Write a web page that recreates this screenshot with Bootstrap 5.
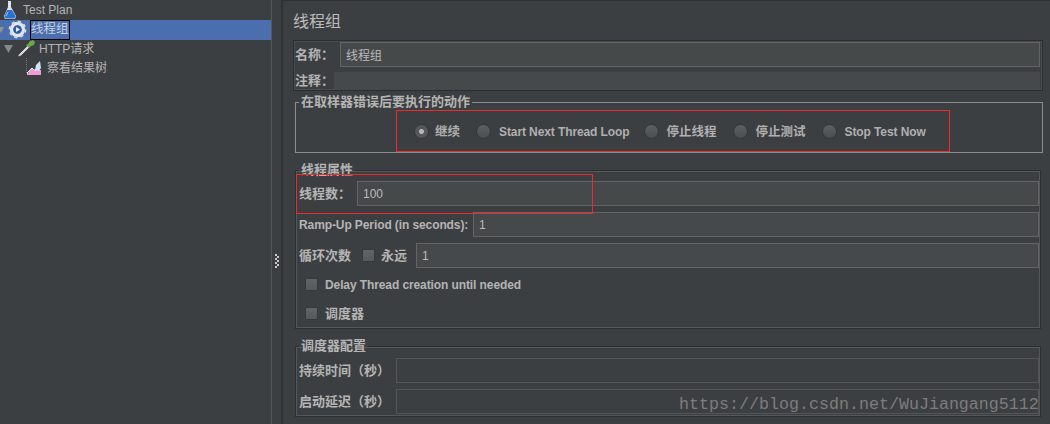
<!doctype html>
<html lang="en">
  <head>
    <meta charset="UTF-8" />
    <title>线程组</title>
    <link rel="stylesheet" href="https://cdn.jsdelivr.net/npm/bootstrap@5.3.0/dist/css/bootstrap.min.css" />
    <style>
      html, body { width: 1050px; height: 424px; overflow: hidden; }
      body {
        background: #3c3f41; color: #bbb; position: relative;
        font: 13px/14px "Liberation Sans", "Noto Sans CJK SC", sans-serif;
      }
      .tree-pane { width: 271px; height: 424px; flex: none; position: relative; }
      .tree-row { height: 19px; display: flex; align-items: center; white-space: nowrap; color: #b4b4b4; font-size: 12px; }
      .tree-row svg { flex: none; }
      .tree-sel { background: #4b6eaf; height: 20px; margin-top: 1px; margin-bottom: -1px; }
      .tree-focus { border: 1px solid #000; height: 20px; line-height: 17px; width: 40px; margin-left: 3px; font-size: 12.500px; color: #c6cfdf; }
      .tree-link { position: absolute; left: 26px; top: 58px; width: 3px; height: 15px; border-left: 1px dotted #77797b; border-bottom: 1px dotted #77797b; }
      .splitter { width: 12px; height: 424px; flex: none; padding-left: 3px; border-left: 1px solid #55585a; border-right: 2px solid #2f3234; }
      .grip { margin-top: 98px; }
      .main-pane { flex: 1; min-width: 0; padding: 0 7px 0 10px; border-top: 1px solid #2f3234; }
      .pane-title { font-size: 16px; line-height: 22px; margin: 10px 0 7px; color: #bbb; }
      .name-box { height: 51px; border: 1px solid #2b2e30; box-shadow: 0 0 0 1px #4a4d4f inset; padding: 1px 2px 1px 1px; }
      .name-row { height: 25px; }
      .cmt-row { height: 18px; margin-top: 5px; }
      .lbl { font-weight: 700; color: #b4b4b4; white-space: nowrap; flex: none; }
      .lat { font-size: 12px; letter-spacing: -0.1px; }
      .name-lbl { width: 45px; }
      .cmt-lbl { width: 39px; }
      .tf {
        background: #45494a; border: 1px solid #646464; border-radius: 0; color: #bbb;
        font: 12px/14px "Liberation Sans", "Noto Sans CJK SC", sans-serif;
        height: 25px; padding: 0 5px; box-shadow: none; min-width: 0; width: auto;
      }
      .tf:focus { background: #45494a; color: #bbb; border-color: #646464; box-shadow: none; }
      .tf-off, .tf-off:disabled { background: #3c3f41; border-color: #555; }
      .cmt-fill { background: #45494a; height: 18px; flex: 1; }
      .grp { border: 1px solid #2d3032; box-shadow: 0 0 0 1px #55585a inset; margin: 10px 2px 0 2px; min-width: 0; padding: 4px 1px 0 3px; }
      .grp-last { padding: 5px 1px 2px 3px; }
      .grp-light { border-color: #8a8c8d; box-shadow: none; margin: 4px 0 0 2px; height: 58px; padding: 0; }
      .grp legend {
        float: none; width: auto; margin: 0; padding: 0 2px; font-size: 13px; line-height: 14px; height: 14px;
        font-weight: 700; color: #b4b4b4;
      }
      .grp-light legend { margin-left: 3px; }
      .radio-line { height: 44px; padding-left: 118px; align-items: center; padding-top: 1px; }
      .rad {
        width: 15px; height: 15px; border-radius: 50%; flex: none; display: inline-block;
        background: linear-gradient(#5c6062, #4b4e50); border: 1px solid #333638;
      }
      .rad-on { background: radial-gradient(circle, #b9b9b9 0 2px, #55585a 3px); }
      .rad-txt { font-size: 12.500px; font-weight: 700; color: #b0b0b0; margin-left: 8px; margin-right: 16px; white-space: nowrap; }
      .rad-txt.first { margin-left: 6px; }
      .rad-txt.lat { font-size: 12px; margin-right: 14px; }
      .fld-row { height: 25px; }
      .fld-row + .fld-row { margin-top: 6px; }
      .chk {
        width: 13px; height: 13px; flex: none; border-radius: 1px;
        background: linear-gradient(#626567, #56595b); border: 1px solid #36393b; display: inline-block;
      }
      .chk-row { height: 29px; padding-left: 6px; }
      .chk-row .lbl { margin-left: 7px; }
      .w-threads { width: 58px; }
      .w-ramp { width: 174px; }
      .w-loop { width: 63px; }
      .w-forever { width: 41px; padding-left: 6px; }
      .w-sched { width: 97px; }
      .mt-2px { margin-top: 2px; }
      .red-box { position: absolute; border: 1px solid #ee2c2c; pointer-events: none; }
      .red-a { left: 396px; top: 110px; width: 554px; height: 42px; }
      .red-b { left: 296px; top: 174px; width: 297px; height: 40px; }
      .wm { position: absolute; left: 679px; top: 395px; font: 16.670px/20px "Liberation Mono", monospace; color: #7c7d7d; white-space: nowrap; }
    </style>
  </head>
  <body>
    <div class="d-flex">
      <!-- tree -->
      <div class="tree-pane">
        <div class="tree-row">
          <svg width="18" height="19" viewBox="0 0 18 19"><path d="M8 1h3v6l5 9-1 3H5l-1-3 4-9z" fill="#dfe3e8"/><path d="M7 10h5l3.500 6-1 2.500H5.500l-1-2.500z" fill="#2a72d0"/><path d="M8 12l-2 4" stroke="#9cc6f2" fill="none"/></svg>
          <span style="margin-left: 5px">Test Plan</span>
        </div>
        <div class="tree-row tree-sel">
          <svg width="27" height="20" viewBox="0 0 27 20"><path d="M-2 7h6l-3 6z" fill="#8f9295"/><g transform="translate(17.500 9.500)"><circle r="6" fill="none" stroke="#e2e5e9" stroke-width="3.400"/><circle r="7.800" fill="none" stroke="#d3d7dc" stroke-width="2.200" stroke-dasharray="3 3.130"/><circle r="4" fill="#2c5fa6"/><path d="M-1.500-2.500 2.500 0-1.500 2.500z" fill="#e8edf2"/></g></svg>
          <span class="tree-focus">线程组</span>
        </div>
        <div class="tree-row">
          <svg width="37" height="19" viewBox="0 0 37 19"><path d="M4 6h9l-4.500 8z" fill="#85888a"/><path d="M17 18l2-3 9-9 2 2-9 9z" fill="#d6d8da" stroke="#26282a" stroke-width=".7"/><path d="M29 9l-3-3 2-1 2-3 3-1 2 2-1 3-3 1z" fill="#6aa84f"/></svg>
          <span style="margin-left: 2px">HTTP请求</span>
        </div>
        <div class="tree-row">
          <svg width="47" height="19" viewBox="0 0 47 19"><path d="M27 17v-2l5-5 2 2h7v5z" fill="#f09bd8"/><path d="M27 15l5-5 2 2h2" fill="none" stroke="#f7f7f7"/><path d="M35 12l1-5 4-4 1 7-2 3z" fill="#cfe3f7"/></svg>
          <span>察看结果树</span>
        </div>
        <div class="tree-link"></div>
      </div>
      <!-- splitter -->
      <div class="splitter d-flex align-items-center">
        <svg class="grip" width="4" height="14" viewBox="0 0 4 14"><g fill="#c8c8c8"><rect x="0" y="0" width="2" height="2"/><rect x="2" y="2" width="2" height="2"/><rect x="0" y="4" width="2" height="2"/><rect x="2" y="6" width="2" height="2"/><rect x="0" y="8" width="2" height="2"/><rect x="2" y="10" width="2" height="2"/><rect x="0" y="12" width="2" height="2"/></g></svg>
      </div>
      <!-- form -->
      <div class="main-pane">
        <div class="pane-title">线程组</div>
        <div class="name-box">
          <div class="d-flex align-items-center name-row">
            <span class="lbl name-lbl">名称：</span>
            <input class="form-control tf flex-fill" value="线程组" />
          </div>
          <div class="d-flex align-items-center cmt-row">
            <span class="lbl cmt-lbl">注释：</span>
            <div class="cmt-fill"></div>
          </div>
        </div>

        <fieldset class="grp grp-light">
          <legend>在取样器错误后要执行的动作</legend>
          <div class="d-flex radio-line">
            <span class="rad rad-on"></span><span class="rad-txt first">继续</span>
            <span class="rad"></span><span class="rad-txt lat">Start Next Thread Loop</span>
            <span class="rad"></span><span class="rad-txt">停止线程</span>
            <span class="rad"></span><span class="rad-txt">停止测试</span>
            <span class="rad"></span><span class="rad-txt lat">Stop Test Now</span>
          </div>
        </fieldset>

        <fieldset class="grp">
          <legend>线程属性</legend>
          <div class="d-flex align-items-center fld-row">
            <span class="lbl w-threads">线程数：</span>
            <input class="form-control tf flex-fill" value="100" />
          </div>
          <div class="d-flex align-items-center fld-row">
            <span class="lbl lat w-ramp">Ramp-Up Period (in seconds):</span>
            <input class="form-control tf flex-fill" value="1" />
          </div>
          <div class="d-flex align-items-center fld-row">
            <span class="lbl w-loop">循环次数</span>
            <span class="chk"></span>
            <span class="lbl w-forever">永远</span>
            <input class="form-control tf flex-fill" value="1" />
          </div>
          <div class="d-flex align-items-center chk-row mt-2px">
            <span class="chk"></span><span class="lbl lat">Delay Thread creation until needed</span>
          </div>
          <div class="d-flex align-items-center chk-row">
            <span class="chk"></span><span class="lbl">调度器</span>
          </div>
        </fieldset>

        <fieldset class="grp grp-last">
          <legend>调度器配置</legend>
          <div class="d-flex align-items-center fld-row">
            <span class="lbl w-sched">持续时间（秒）</span>
            <input class="form-control tf tf-off flex-fill" disabled />
          </div>
          <div class="d-flex align-items-center fld-row">
            <span class="lbl w-sched">启动延迟（秒）</span>
            <input class="form-control tf tf-off flex-fill" disabled />
          </div>
        </fieldset>
      </div>
    </div>

    <div class="red-box red-a"></div>
    <div class="red-box red-b"></div>
    <div class="wm">https://blog.csdn.net/WuJiangang5112</div>
    <script src="https://cdn.jsdelivr.net/npm/bootstrap@5.3.0/dist/js/bootstrap.bundle.min.js"></script>
  </body>
</html>
